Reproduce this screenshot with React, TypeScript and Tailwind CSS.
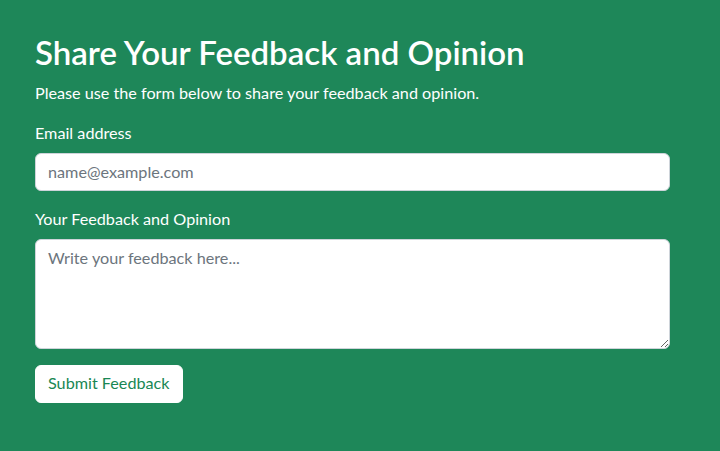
import React from "react";

export default function App() {
  return (
    <div
      className="min-h-[451px] w-full bg-[#1e8759] text-white"
      style={{ fontFamily: '"Segoe UI", Lato, sans-serif' }}
    >
      <div className="pl-[35px] pr-[50px] pt-[33px]">
        <h1 className="mb-2 text-[33px] font-semibold leading-[1.2]">
          Share Your Feedback and Opinion
        </h1>
        <p className="mb-4 text-[16.2px] leading-6">
          Please use the form below to share your feedback and opinion.
        </p>

        <form onSubmit={(e) => e.preventDefault()}>
          <div className="mb-4">
            <label htmlFor="email" className="mb-2 block text-[16.2px] leading-6">
              Email address
            </label>
            <input
              id="email"
              type="email"
              placeholder="name@example.com"
              className="block h-[38px] w-full rounded-md border border-[#ced4da] bg-white px-3 text-[16.2px] text-[#212529] placeholder:text-[#6c757d] outline-none"
            />
          </div>

          <div className="mb-4">
            <label htmlFor="feedback" className="mb-2 block text-[16.2px] leading-6">
              Your Feedback and Opinion
            </label>
            <textarea
              id="feedback"
              rows={4}
              placeholder="Write your feedback here..."
              className="block h-[110px] w-full rounded-md border border-[#ced4da] bg-white px-3 py-1.5 text-[16.2px] leading-6 text-[#212529] placeholder:text-[#6c757d] outline-none"
            />
          </div>

          <button
            type="submit"
            className="h-[38px] rounded-md border border-white bg-white px-3 text-[16.2px] text-[#198754]"
          >
            Submit Feedback
          </button>
        </form>
      </div>
    </div>
  );
}
